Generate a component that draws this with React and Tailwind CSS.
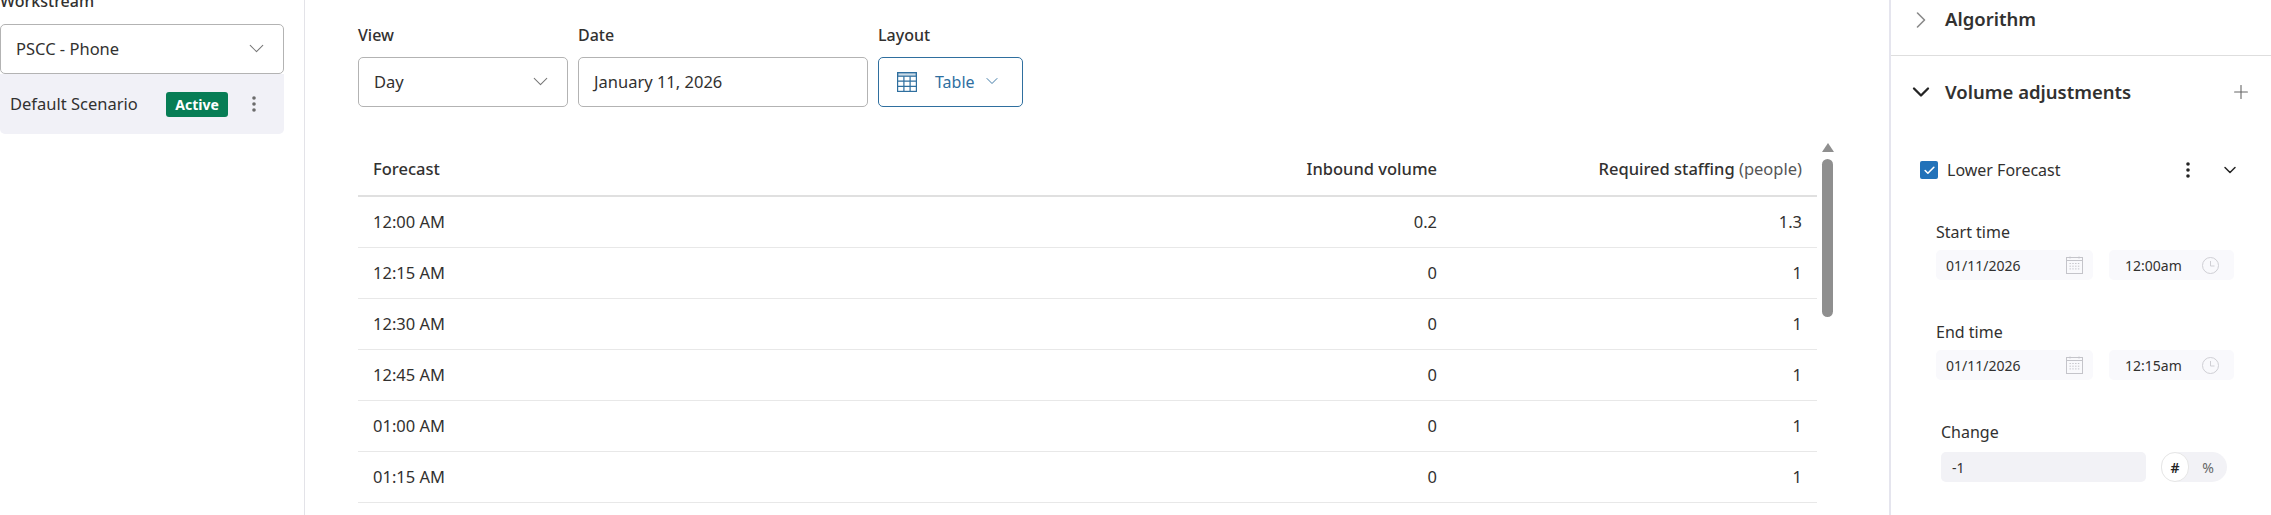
import React from 'react';
import { ChevronDown, ChevronRight, Plus, Check } from 'lucide-react';

const rows = [
  ['12:00 AM', '0.2', '1.3'],
  ['12:15 AM', '0', '1'],
  ['12:30 AM', '0', '1'],
  ['12:45 AM', '0', '1'],
  ['01:00 AM', '0', '1'],
  ['01:15 AM', '0', '1'],
];

const Kebab = ({ className }) => (
  <svg width="4" height="18" viewBox="0 0 4 18" className={className} fill="currentColor">
    <circle cx="2" cy="3" r="1.8" />
    <circle cx="2" cy="9" r="1.8" />
    <circle cx="2" cy="15" r="1.8" />
  </svg>
);

const TableIcon = () => (
  <svg width="20" height="20" viewBox="0 0 20 20" fill="none" stroke="#2f6f9f" strokeWidth="1.2">
    <rect x="0.6" y="0.6" width="18.8" height="18.8" />
    <rect x="0.6" y="0.6" width="18.8" height="3.6" fill="#2f6f9f" fillOpacity="0.25" />
    <path d="M0.6 9.2h18.8M0.6 14.3h18.8M6.9 4.2v15.2M13.1 4.2v15.2" />
  </svg>
);

const CalendarIcon = () => (
  <svg width="17" height="18" viewBox="0 0 17 18" fill="none" stroke="#c4c4ca" strokeWidth="1">
    <rect x="0.5" y="1.5" width="16" height="16" />
    <path d="M0.5 4.5h16" />
    <path d="M4 0.5v2M13 0.5v2" />
    <path d="M3.5 7.5h10M3.5 10.2h10M3.5 12.9h10" strokeDasharray="1.4 1.4" />
  </svg>
);

const ClockIcon = () => (
  <svg width="17" height="17" viewBox="0 0 17 17" fill="none" stroke="#cfcfd4" strokeWidth="1">
    <circle cx="8.5" cy="8.5" r="8" />
    <path d="M8.5 4v5h4" />
  </svg>
);

const Field = ({ label, children, className }) => (
  <div className={className}>
    <div className="h-[33px] text-[16px] leading-[22px] font-medium text-[#323130]">{label}</div>
    {children}
  </div>
);

const DateTime = ({ label, date, time, className }) => (
  <div className={className}>
    <div className="text-[16px] leading-[20px] text-[#323130] mb-[8px]">{label}</div>
    <div className="flex gap-[16px]">
      <div className="w-[157px] h-[30px] rounded-[5px] bg-[#f9f9fc] flex items-center justify-between pl-[10px] pr-[10px] text-[14px] text-[#323130]">
        <span>{date}</span>
        <CalendarIcon />
      </div>
      <div className="w-[125px] h-[30px] rounded-[5px] bg-[#f9f9fc] flex items-center justify-between pl-[16px] pr-[15px] text-[14px] text-[#323130]">
        <span>{time}</span>
        <ClockIcon />
      </div>
    </div>
  </div>
);

export default function App() {
  return (
    <div className="h-[515px] w-full overflow-hidden flex bg-white text-[#323130] font-['Noto_Sans','Open_Sans',sans-serif]">
      {/* scenario list */}
      <aside className="w-[305px] h-full shrink-0 border-r border-[#e3e3e8] pr-[20px]">
        <div className="-mt-[9px] h-[33px] text-[16px] leading-[20px] font-medium">Workstream</div>
        <div className="h-[50px] rounded-[5px] border border-[#b3b3b3] flex items-center justify-between pl-[15px] pr-[14px] text-[16.5px]">
          <span>PSCC - Phone</span>
          <ChevronDown size={25} strokeWidth={1} className="text-[#777] -mt-[2px]" />
        </div>
        <div className="h-[60px] rounded-b-[5px] bg-[#f1f1f7] flex items-center pl-[10px] text-[16.5px]">
          <span className="w-[156px]">Default Scenario</span>
          <span className="h-[25px] w-[62px] rounded-[3px] bg-[#077d55] text-white text-[14px] font-bold flex items-center justify-center">Active</span>
          <Kebab className="ml-[24px] text-[#6b6b6b]" />
        </div>
      </aside>

      {/* forecast table */}
      <main className="flex-1 min-w-0 pl-[53px] pr-[54px] pt-[24px] flex flex-col">
        <div className="flex gap-[10px]">
          <Field label="View" className="w-[210px]">
            <div className="h-[50px] rounded-[5px] border border-[#b3b3b3] flex items-center justify-between pl-[15px] pr-[14px] text-[16.5px]">
              <span>Day</span>
              <ChevronDown size={25} strokeWidth={1} className="text-[#777] -mt-[2px]" />
            </div>
          </Field>
          <Field label="Date" className="w-[290px]">
            <div className="h-[50px] rounded-[5px] border border-[#b3b3b3] flex items-center pl-[15px] text-[16.5px]">January 11, 2026</div>
          </Field>
          <Field label="Layout" className="w-[145px]">
            <div className="h-[50px] rounded-[5px] border border-[#2f6f9f] flex items-center pl-[18px] text-[16px] text-[#2f6f9f]">
              <TableIcon />
              <span className="ml-[18px]">Table</span>
              <ChevronDown size={20} strokeWidth={1.1} className="ml-[7px] -mt-[2px]" />
            </div>
          </Field>
        </div>

        <div className="flex mt-[37px] gap-[3px]">
          <div className="flex-1 min-w-0">
            <div className="h-[53px] flex items-center border-b-2 border-[#e0e0e0] px-[15px] text-[16.5px] font-medium">
              <span className="flex-1">Forecast</span>
              <span className="w-[200px] text-right">Inbound volume</span>
              <span className="w-[365px] text-right">Required staffing <span className="font-normal text-[#555]">(people)</span></span>
            </div>
            {rows.map(([time, inbound, staffing]) => (
              <div key={time} className="h-[51px] flex items-center border-b border-[#e8e8e8] px-[15px] text-[16.5px]">
                <span className="flex-1">{time}</span>
                <span className="w-[200px] text-right">{inbound}</span>
                <span className="w-[365px] text-right">{staffing}</span>
              </div>
            ))}
          </div>
          <div className="w-[15px] shrink-0 flex flex-col items-center -mt-[1px]">
            <div className="w-0 h-0 border-x-[6px] border-x-transparent border-b-[9px] border-b-[#8f8f8f]" />
            <div className="w-[11px] h-[158px] mt-[7px] rounded-full bg-[#8f8f8f]" />
          </div>
        </div>
      </main>

      {/* settings panel */}
      <aside className="w-[382px] h-full shrink-0 border-l-2 border-[#e5e5ee]">
        <div className="h-[56px] border-b border-[#dedede] flex items-start pt-[6px] pl-[16px]">
          <ChevronRight size={28} strokeWidth={1.4} className="text-[#8a8a8a]" />
          <span className="ml-[10px] text-[18.5px] leading-[26px] font-semibold">Algorithm</span>
        </div>
        <div className="h-[72px] flex items-center pl-[16px] pr-[19px]">
          <ChevronDown size={28} strokeWidth={2} className="text-[#242424]" />
          <span className="ml-[10px] text-[18.5px] font-semibold flex-1">Volume adjustments</span>
          <Plus size={22} strokeWidth={1.2} className="text-[#666]" />
        </div>
        <div className="h-[30px] mt-[27px] flex items-center pl-[29px]">
          <span className="w-[18px] h-[18px] rounded-[2px] bg-[#2272b9] flex items-center justify-center">
            <Check size={13} strokeWidth={3} className="text-white" />
          </span>
          <span className="ml-[9px] text-[16px] w-[239px]">Lower Forecast</span>
          <Kebab className="text-[#242424]" />
          <ChevronDown size={20} strokeWidth={1.8} className="ml-[30px] text-[#242424]" />
        </div>
        <DateTime label="Start time" date="01/11/2026" time="12:00am" className="ml-[45px] mt-[37px]" />
        <DateTime label="End time" date="01/11/2026" time="12:15am" className="ml-[45px] mt-[42px]" />
        <div className="ml-[50px] mt-[42px]">
          <div className="text-[16px] leading-[20px] mb-[10px]">Change</div>
          <div className="flex items-center">
            <div className="w-[205px] h-[30px] rounded-[5px] bg-[#f2f2f6] flex items-center pl-[11px] text-[14px]">-1</div>
            <div className="ml-[15px] w-[66px] h-[30px] rounded-full bg-[#f2f2f6] flex items-center text-[14px]">
              <span className="w-[28px] h-[30px] rounded-full bg-white border border-[#e6e6e6] flex items-center justify-center font-semibold text-[#242424]">#</span>
              <span className="flex-1 text-center text-[#666]">%</span>
            </div>
          </div>
        </div>
      </aside>
    </div>
  );
}
